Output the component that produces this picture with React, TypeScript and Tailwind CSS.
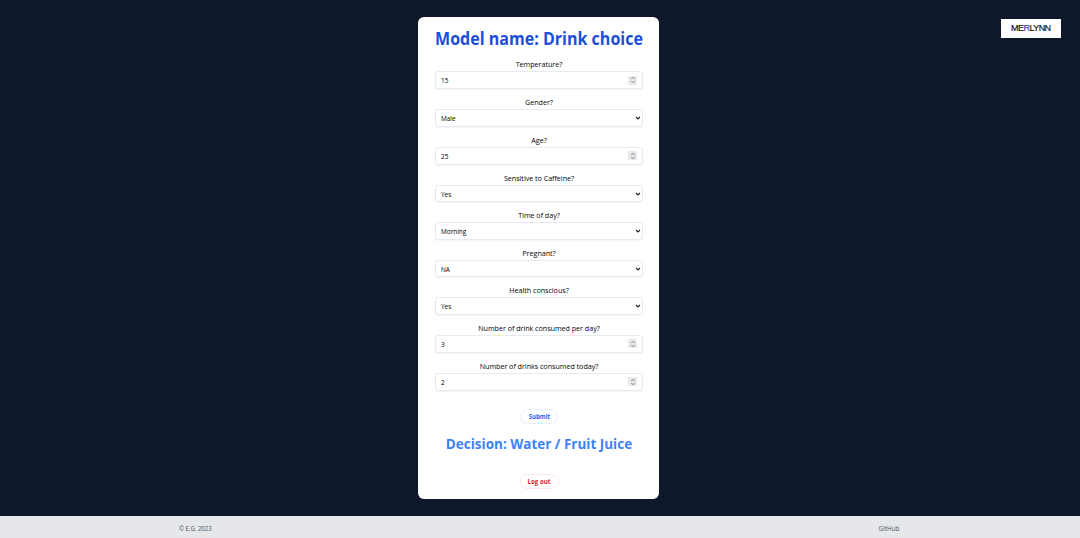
import { ChevronDown, ChevronUp } from "lucide-react";

type Field = { label: string; value: string; kind: "number" | "select" };

const fields: Field[] = [
  { label: "Temperature?", value: "15", kind: "number" },
  { label: "Gender?", value: "Male", kind: "select" },
  { label: "Age?", value: "25", kind: "number" },
  { label: "Sensitive to Caffeine?", value: "Yes", kind: "select" },
  { label: "Time of day?", value: "Morning", kind: "select" },
  { label: "Pregnant?", value: "NA", kind: "select" },
  { label: "Health conscious?", value: "Yes", kind: "select" },
  { label: "Number of drink consumed per day?", value: "3", kind: "number" },
  { label: "Number of drinks consumed today?", value: "2", kind: "number" },
];

function FormField({ label, value, kind }: Field) {
  const isNumber = kind === "number";
  return (
    <div className={isNumber ? "h-[38px]" : "h-[37.5px]"}>
      <div className="h-[14px] scale-x-[0.9] text-center text-[8px] leading-[13.5px] tracking-[-0.05px] text-[#050505]">
        {label}
      </div>
      <div
        className={`flex items-center justify-between rounded-[3px] border border-[#e8eaf1] bg-white pl-[5px] text-[7px] text-black shadow-[0_1px_1px_rgba(30,41,80,0.05)] ${
          isNumber ? "h-[18px] pr-[5px]" : "h-[17.5px] pr-[1px]"
        }`}
      >
        <span className="origin-left scale-x-[0.92] pt-[1px] leading-none">{value}</span>
        {isNumber ? (
          <span className="flex h-[9px] w-[9px] flex-col items-center justify-center bg-[#e8e8ec] text-[#77777d]">
            <ChevronUp className="h-[4px] w-[6px]" strokeWidth={4} preserveAspectRatio="none" />
            <ChevronDown className="h-[4px] w-[6px]" strokeWidth={4} preserveAspectRatio="none" />
          </span>
        ) : (
          <svg viewBox="0 0 6 6" className="h-[6px] w-[6px]" fill="none" stroke="#222" strokeWidth="1.1">
            <path d="M1 2l2 2 2-2" />
          </svg>
        )}
      </div>
    </div>
  );
}

export default function App() {
  return (
    <div className="flex h-[538px] flex-col overflow-hidden bg-[#0f172a] font-['Open_Sans','Noto_Sans',sans-serif]">
      <main className="grid flex-1 grid-cols-[1fr_241px_1fr] items-start pt-[17px] pr-[3px]">
        <div />
        <section className="flex h-[481.5px] flex-col rounded-[6px] bg-white pr-[16px] pl-[17px]">
          <h1 className="mt-[9px] flex h-[25px] scale-x-[0.943] justify-center text-[17px] leading-[26px] font-bold whitespace-nowrap text-[#1d4ed8]">
            Model name: Drink choice
          </h1>
          <form className="mt-[6.25px]">
            {fields.map((field) => (
              <FormField key={field.label} {...field} />
            ))}
          </form>
          <button
            type="button"
            className="mt-[11.75px] h-[15px] w-[38px] shrink-0 self-center rounded-full border border-[#e6eefd] text-[7px] leading-[13px] font-bold text-[#2563eb]"
          >
            <span className="inline-block scale-x-[0.86]">Submit</span>
          </button>
          <h2 className="mt-[8px] flex h-[24px] scale-x-[0.93] justify-center text-[14.5px] leading-[23.5px] font-bold whitespace-nowrap text-[#3b82f6]">
            Decision: Water / Fruit Juice
          </h2>
          <button
            type="button"
            className="mt-[18px] h-[15px] w-[39px] shrink-0 self-center rounded-full border border-[#fde8e8] text-[7px] leading-[13px] font-bold text-[#dc2626]"
          >
            <span className="inline-block scale-x-[0.88]">Log out</span>
          </button>
        </section>
        <div className="mt-[2px] mr-[16px] flex h-[18.5px] w-[60px] items-center justify-center justify-self-end bg-white font-['Liberation_Sans',sans-serif] text-[9.5px] text-[#151515]">
          <span className="scale-x-[0.95] tracking-[-0.6px] [-webkit-text-stroke:0.2px]">
            ME<span className="text-[#3b43b5]">R</span>LYNN
          </span>
        </div>
      </main>
      <footer className="flex h-[22px] shrink-0 items-center justify-between bg-[#e5e7eb] pt-[4px] pr-[181px] pl-[179px] text-[6.8px] text-[#4b5563]">
        <span className="origin-left scale-x-[0.88]">© E.G. 2023</span>
        <span className="origin-right scale-x-[0.93]">GitHub</span>
      </footer>
    </div>
  );
}
